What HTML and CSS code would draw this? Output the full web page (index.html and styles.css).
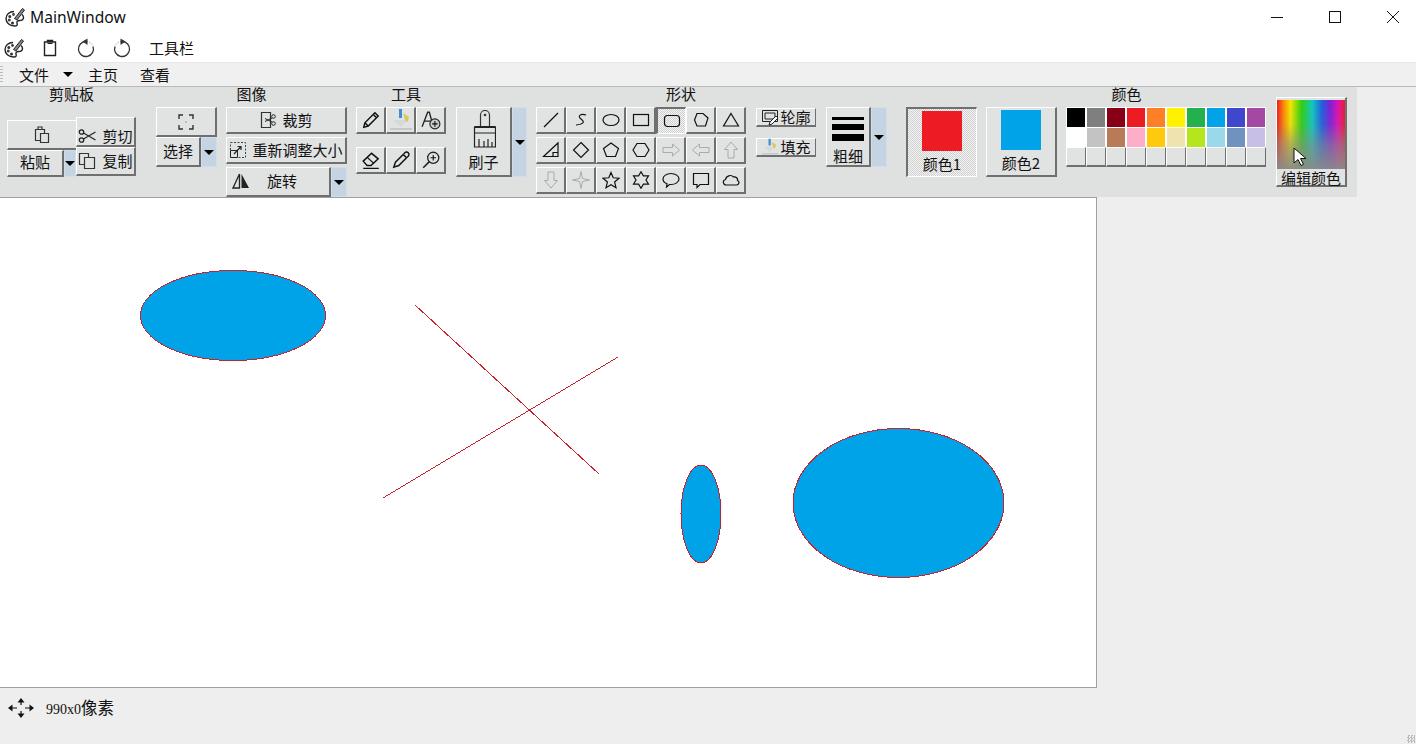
FILE: index.html
```html
<!DOCTYPE html>
<html lang="zh-CN">
<head>
    <meta charset="UTF-8">
    <title>MainWindow</title>
    <link rel="stylesheet" href="styles.css">
</head>
<body>
<svg class="defs" aria-hidden="true">
    <symbol id="palette" viewBox="0 0 20 20">
        <path d="M9 4.500C4.500 4.500 1 7.500 1 11.500S4.500 19 9.500 19c3 0 3-1.500 2.500-3-.5-1.500.5-2.500 2.500-2.500 2.500 0 4-1 4-3 0-1-.5-2-1.500-3" fill="#fff" stroke="#222" stroke-width="1.400"/>
        <circle cx="4.800" cy="9.500" r="1.500" fill="#333"/><circle cx="4.300" cy="13" r="1.500" fill="#444"/><circle cx="7.500" cy="16" r="1.500" fill="#333"/><circle cx="8.500" cy="7.500" r="1.400" fill="#444"/>
        <path d="M9.500 11.500 17.500 1.500l2 1.500-7.500 10z" fill="#888" stroke="#222"/>
    </symbol>
    <symbol id="paint" viewBox="0 0 24 24">
        <rect x="10" y="1" width="3" height="9" fill="#3c8fd6"/>
        <path d="M4 12h15l-7.500 7z" fill="#d8d8d8"/>
        <path d="M14 5 20 9l-1.500 5-2-1z" fill="#d8c85a"/>
        <path d="M1 21h22" stroke="#c8c8c8" stroke-width="2"/>
    </symbol>
    <symbol id="undo" viewBox="0 0 20 20">
        <path d="M10 3.500A7.500 7.500 0 1 0 17 8.500" fill="none" stroke="#333" stroke-width="1.300"/>
        <path d="M11 3.500A7.500 7.500 0 0 1 17 8" fill="none" stroke="#888" stroke-dasharray="1 1.500"/>
        <path d="M6.500 3.500 11.500 .5V7z" fill="#333"/>
    </symbol>
</svg>

<div class="window">
    <header class="titlebar">
        <svg class="title-icon"><use href="#palette"/></svg>
        <span class="title-text">MainWindow</span>
        <div class="win-btns">
            <svg class="win-btn" viewBox="0 0 12 12"><path d="M0 6.500h12" stroke="#111" fill="none"/></svg>
            <svg class="win-btn" viewBox="0 0 12 12"><rect x=".5" y=".5" width="11" height="11" stroke="#111" fill="none"/></svg>
            <svg class="win-btn" viewBox="0 0 12 12"><path d="M0 0l12 12M12 0 0 12" stroke="#111" fill="none"/></svg>
        </div>
    </header>

    <div class="quickbar">
        <svg class="quick-icon"><use href="#palette"/></svg>
        <svg class="quick-icon" viewBox="0 0 20 20"><path d="M4.500 4H15.500V17.500H4.500zM7.500 4V2.500h5V4" fill="none" stroke="#222" stroke-width="1.400"/><path d="M7.500 5.500h5" stroke="#222"/></svg>
        <svg class="quick-icon"><use href="#undo"/></svg>
        <svg class="quick-icon flip"><use href="#undo"/></svg>
        <span class="quick-text">工具栏</span>
    </div>

    <nav class="menubar">
        <span class="menu-item file-item">文件</span>
        <span class="arrow menu-arrow"></span>
        <span class="menu-item home-item">主页</span>
        <span class="menu-item view-item">查看</span>
    </nav>

    <section class="ribbon">
        <div class="group clip-group">
            <div class="group-label">剪贴板</div>
            <div class="group-body">
                <div class="paste">
                    <button class="btn paste-top">
                        <svg class="icon" viewBox="0 0 18 18"><path d="M2.500 3.500h9v11h-9zM5 3.500V1h4v2.500" fill="none" stroke="#333" stroke-width="1.200"/><path d="M7.500 7.500h8v9h-8z" fill="#e1e2e2" stroke="#333" stroke-width="1.200"/></svg>
                    </button>
                    <div class="paste-low">
                        <button class="btn paste-text">粘贴</button>
                        <button class="drop"><span class="arrow"></span></button>
                    </div>
                </div>
                <div class="cutcopy">
                    <button class="btn small-btn cut-btn">
                        <svg class="icon" viewBox="0 0 18 18"><circle cx="3.500" cy="5" r="2.200" fill="none" stroke="#222" stroke-width="1.300"/><circle cx="3.500" cy="13" r="2.200" fill="none" stroke="#222" stroke-width="1.300"/><path d="M5.500 6 17.500 13M5.500 12 17.500 5" stroke="#222" fill="none" stroke-width="1.200"/></svg>
                        <span>剪切</span>
                    </button>
                    <button class="btn small-btn">
                        <svg class="icon" viewBox="0 0 18 18"><path d="M1.500 1.500h9v11h-9z" fill="none" stroke="#333" stroke-width="1.200"/><path d="M6.500 5.500h10v11h-10z" fill="#e1e2e2" stroke="#333" stroke-width="1.200"/></svg>
                        <span>复制</span>
                    </button>
                </div>
            </div>
        </div>

        <div class="group image-group">
            <div class="group-label">图像</div>
            <div class="group-body">
                <div class="select">
                    <button class="btn select-top">
                        <svg class="icon" viewBox="0 0 18 18"><path d="M2 6V2h4M12 2h4v4M16 12v4h-4M6 16H2v-4" fill="none" stroke="#333" stroke-width="1.400"/><rect x="8.500" y="8.500" width="1" height="1" fill="#555"/></svg>
                    </button>
                    <div class="select-low">
                        <button class="btn select-text">选择</button>
                        <button class="drop"><span class="arrow"></span></button>
                    </div>
                </div>
                <div class="image-tools">
                    <button class="btn wide-btn">
                        <svg class="icon" viewBox="0 0 18 18"><path d="M2.500 1.500h9v15h-9z" fill="none" stroke="#333" stroke-width="1.200"/><circle cx="14.500" cy="5.500" r="1.800" fill="none" stroke="#222"/><circle cx="14.500" cy="12.500" r="1.800" fill="none" stroke="#222"/><path d="M13 7 6 10.500M13 11 6 7.500" stroke="#222"/></svg>
                        <span>裁剪</span>
                    </button>
                    <button class="btn wide-btn">
                        <svg class="icon" viewBox="0 0 18 18"><rect x="1.500" y="1.500" width="15" height="15" fill="none" stroke="#444" stroke-dasharray="2 1.500"/><path d="M1.500 9.500h7v7h-7z" fill="#e1e2e2" stroke="#222"/><path d="M5 13 11.500 6M8.500 5.500h3.500v3.500" fill="none" stroke="#222" stroke-width="1.200"/></svg>
                        <span>重新调整大小</span>
                    </button>
                    <div class="rotate">
                        <button class="btn rotate-text">
                            <svg class="icon" viewBox="0 0 18 18"><path d="M7.500 2V16H1z" fill="none" stroke="#222" stroke-width="1.300"/><path d="M9.500 2V16H17z" fill="#222"/></svg>
                            <span class="rotate-label">旋转</span>
                        </button>
                        <button class="drop"><span class="arrow"></span></button>
                    </div>
                </div>
            </div>
        </div>

        <div class="group tools-group">
            <div class="group-label">工具</div>
            <div class="group-body">
                <div class="tool-grid">
                    <button class="btn cell">
                        <svg class="tool-icon" viewBox="0 0 18 18"><path d="M2.500 15.500l1-4L12.500 2.500l3 3L6.500 14.500zM3.500 11.500l3 3M11 4l3 3" fill="none" stroke="#111" stroke-width="1.300"/></svg>
                    </button>
                    <button class="btn cell"><svg class="icon-paint"><use href="#paint"/></svg></button>
                    <button class="btn cell">
                        <svg class="tool-icon" viewBox="0 0 18 18"><path d="M1 15 6 2h1.500L10 11M3 10h6" fill="none" stroke="#222" stroke-width="1.200"/><circle cx="12.500" cy="12.500" r="4.500" fill="#ccc" stroke="#222"/><path d="M10 12.500h5M12.500 10v5" stroke="#111"/></svg>
                    </button>
                    <button class="btn cell">
                        <svg class="tool-icon" viewBox="0 0 18 18"><path d="M2 10 9.500 3l6 5L9 14H5.500z" fill="none" stroke="#111" stroke-width="1.300"/><path d="M5.500 6.500 11.500 12M2 16.500h14" fill="none" stroke="#111"/></svg>
                    </button>
                    <button class="btn cell">
                        <svg class="tool-icon" viewBox="0 0 18 18"><path d="M2.500 15.500 4 11l7-7 3 3-7 7zM11.500 3.500c1.500-2 3-2 4-1s1 2.500-1 4" fill="none" stroke="#111" stroke-width="1.300"/></svg>
                    </button>
                    <button class="btn cell">
                        <svg class="tool-icon" viewBox="0 0 18 18"><circle cx="11" cy="7" r="5" fill="none" stroke="#222" stroke-width="1.200"/><path d="M7.500 10.500 2 16" stroke="#222" stroke-width="1.400"/><path d="M8.500 7h5M11 4.500v5" stroke="#111"/></svg>
                    </button>
                </div>
            </div>
        </div>

        <div class="group brush-group">
            <div class="group-label"></div>
            <div class="group-body">
                <button class="btn brush-btn">
                    <svg class="brush-icon" viewBox="0 0 24 38"><path d="M8.500 17V5a4.500 4.500 0 0 1 9 0v12z" fill="none" stroke="#333" stroke-width="1.200"/><circle cx="13" cy="5" r="1.300" fill="#333"/><path d="M2.500 17h21v20h-21zM2.500 23h21" fill="none" stroke="#222" stroke-width="1.200"/><path d="M2.500 16h21v2h-21z" fill="#222"/><path d="M7 37v-8M12 37v-6M16 37v-8M20 37v-5" fill="none" stroke="#222" stroke-width="1.200"/></svg>
                    <span>刷子</span>
                </button>
                <button class="drop drop-tall"><span class="arrow"></span></button>
            </div>
        </div>

        <div class="group shapes-group">
            <div class="group-label">形状</div>
            <div class="group-body">
                <div class="shape-grid">
                    <button class="btn cell"><svg class="icon" viewBox="0 0 18 18"><path d="M2 16 16 2" class="sh"/></svg></button>
                    <button class="btn cell"><svg class="icon" viewBox="0 0 18 18"><path d="M14 4C9 2 5 5 9 8s3 5-5 6" class="sh"/></svg></button>
                    <button class="btn cell"><svg class="icon" viewBox="0 0 18 18"><ellipse cx="9" cy="9" rx="8" ry="5.500" class="sh"/></svg></button>
                    <button class="btn cell"><svg class="icon" viewBox="0 0 18 18"><rect x="1.500" y="3.500" width="15" height="11" class="sh"/></svg></button>
                    <button class="btn cell cell-on"><svg class="icon" viewBox="0 0 18 18"><rect x="1.500" y="3.500" width="15" height="11" rx="3" class="sh"/></svg></button>
                    <button class="btn cell"><svg class="icon" viewBox="0 0 18 18"><path d="M5 2.500h6l5 4.500-2.500 8H5L2.500 9z" class="sh"/></svg></button>
                    <button class="btn cell"><svg class="icon" viewBox="0 0 18 18"><path d="M9 2.500 16.500 15h-15z" class="sh"/></svg></button>

                    <button class="btn cell"><svg class="icon" viewBox="0 0 18 18"><path d="M16 2v13.500H1.500zM11 15.500v-4h5" class="sh"/></svg></button>
                    <button class="btn cell"><svg class="icon" viewBox="0 0 18 18"><path d="M9 1.500 16.500 9 9 16.500 1.500 9z" class="sh"/></svg></button>
                    <button class="btn cell"><svg class="icon" viewBox="0 0 18 18"><path d="M9 2 16.500 7.500 13.500 15.500h-9L1.500 7.500z" class="sh"/></svg></button>
                    <button class="btn cell"><svg class="icon" viewBox="0 0 18 18"><path d="M5 2.500h8L17 9l-4 6.500H5L1 9z" class="sh"/></svg></button>
                    <button class="btn cell"><svg class="icon" viewBox="0 0 18 18"><path d="M1 6.500h9.500V3L17.500 9l-7 6v-3.500H1z" class="sh-off"/></svg></button>
                    <button class="btn cell"><svg class="icon" viewBox="0 0 18 18"><path d="M17 6.500H7.500V3L.5 9l7 6v-3.500H17z" class="sh-off"/></svg></button>
                    <button class="btn cell"><svg class="icon" viewBox="0 0 18 18"><path d="M6 17V8.500H2.500L9 1l6.500 7.500H12V17z" class="sh-off"/></svg></button>

                    <button class="btn cell"><svg class="icon" viewBox="0 0 18 18"><path d="M6 1v8.500H2.500L9 17l6.500-7.500H12V1z" class="sh-off"/></svg></button>
                    <button class="btn cell"><svg class="icon" viewBox="0 0 18 18"><path d="M9 .5 10.500 7.500 17.500 9l-7 1.500L9 17.500l-1.500-7L.5 9l7-1.500z" class="sh-off"/></svg></button>
                    <button class="btn cell"><svg class="icon" viewBox="0 0 18 18"><path d="M9 1.500 11.200 6.800 17 7.200 12.600 11l1.400 5.700L9 13.700 4 16.700 5.400 11 1 7.200 6.800 6.800z" class="sh"/></svg></button>
                    <button class="btn cell"><svg class="icon" viewBox="0 0 18 18"><path d="M9 .8 11.400 4.800 16.500 4.800 14 9l2.500 4.200H11.400L9 17.200 6.600 13.200H1.500L4 9 1.500 4.800H6.600z" class="sh"/></svg></button>
                    <button class="btn cell"><svg class="icon" viewBox="0 0 18 18"><path d="M9 2.500c4.500 0 8 2.500 8 5.500s-3.500 5.500-8 5.500H7.500L4.500 16l.5-3.300C2.500 11.800 1 10 1 8c0-3 3.500-5.500 8-5.500z" class="sh"/></svg></button>
                    <button class="btn cell"><svg class="icon" viewBox="0 0 18 18"><path d="M1.500 2.500h15v11H8L5 16.500v-3H1.500z" class="sh"/></svg></button>
                    <button class="btn cell"><svg class="icon" viewBox="0 0 18 18"><path d="M4.500 14C1 14 0 9.500 3.500 8.500 4 5 9 3 11.500 6c3-.5 4.500 2 4 3.500 2.500 1 1.500 4.500-1 4.500z" class="sh"/></svg></button>
                </div>
                <div class="outline-fill">
                    <button class="btn of-btn">
                        <svg class="icon" viewBox="0 0 18 18"><path d="M1.500 2.500h15v11h-15zM4 5h10v6H4z" fill="none" stroke="#222"/><path d="M8 17l1-3 6-6 2 2-6 6z" fill="#fff" stroke="#222"/></svg>
                        <span>轮廓</span>
                    </button>
                    <button class="btn of-btn">
                        <svg class="icon"><use href="#paint"/></svg>
                        <span>填充</span>
                    </button>
                </div>
            </div>
        </div>

        <div class="group thick-group">
            <div class="group-label"></div>
            <div class="group-body">
                <button class="btn thick-btn">
                    <span class="thick-lines"><i class="t1"></i><i class="t2"></i><i class="t3"></i></span>
                    <span class="thick-text">粗细</span>
                </button>
                <button class="drop drop-thick"><span class="arrow"></span></button>
            </div>
        </div>

        <div class="group color-group">
            <div class="group-label">颜色</div>
            <div class="group-body">
                <button class="btn color-btn color-on">
                    <span class="swatch red"></span>
                    <span>颜色1</span>
                </button>
                <button class="btn color-btn">
                    <span class="swatch blue"></span>
                    <span>颜色2</span>
                </button>
                <div class="palette">
                    <i style="background:#000000"></i><i style="background:#7f7f7f"></i><i style="background:#880015"></i><i style="background:#ed1c24"></i><i style="background:#ff7f27"></i><i style="background:#fff200"></i><i style="background:#22b14c"></i><i style="background:#00a2e8"></i><i style="background:#3f48cc"></i><i style="background:#a349a4"></i>
                    <i style="background:#ffffff"></i><i style="background:#c3c3c3"></i><i style="background:#b97a57"></i><i style="background:#ffaec9"></i><i style="background:#ffc90e"></i><i style="background:#efe4b0"></i><i style="background:#b5e61d"></i><i style="background:#99d9ea"></i><i style="background:#7092be"></i><i style="background:#c8bfe7"></i>
                    <i></i><i></i><i></i><i></i><i></i><i></i><i></i><i></i><i></i><i></i>
                </div>
                <button class="btn edit-color">
                    <span class="rainbow"></span>
                    <span class="edit-text">编辑颜色</span>
                    <svg class="cursor" viewBox="0 0 14 20"><path d="M1 1v15l4-3.500 3 6 2.500-1.200-3-5.800H13z" fill="#fff" stroke="#111"/></svg>
                </button>
            </div>
        </div>
    </section>

    <div class="work">
        <svg class="canvas" viewBox="0 1 1096 489">
            <ellipse cx="233" cy="118.500" rx="92.500" ry="45" class="shape"/>
            <ellipse cx="701" cy="317" rx="20" ry="49" class="shape"/>
            <ellipse cx="898.500" cy="306" rx="105.500" ry="74.500" class="shape"/>
            <path d="M415 108 599 277M383 301 618 160" class="line"/>
        </svg>
    </div>

    <footer class="statusbar">
        <svg class="move-icon" viewBox="0 0 26 20"><path d="M13 0l-3.500 4.500h7zM13 20l-3.500-4.500h7zM0 10l4.500-3.500v7zM26 10l-4.500-3.500v7z" fill="#111"/><path d="M4 10h5M17 10h5M13 4v3M13 13v3" stroke="#111" stroke-width="1.200"/></svg>
        <span class="status-text">990x0<span class="status-unit">像素</span></span>
        <span class="grip"></span>
    </footer>
</div>
</body>
</html>
```

FILE: styles.css
```css
*{
    margin: 0;
    padding: 0;
    box-sizing: border-box;
}
html,body{
    height: 100%;
    overflow: hidden;
}
body{
    font-family: "Noto Sans CJK SC", "Liberation Sans", sans-serif;
    font-size: 15px;
    line-height: 18px;
    color: #111;
    background: #eeeeee;
}
button{
    font: inherit;
    color: inherit;
}
.defs{
    position: absolute;
    width: 0;
    height: 0;
}
.window{
    height: 744px;
    display: flex;
    flex-direction: column;
}

/* title bar */
.titlebar{
    height: 34px;
    background: #fff;
    display: flex;
    align-items: center;
    padding-left: 5px;
}
.title-icon{
    width: 20px;
    height: 20px;
}
.title-text{
    font-family: "Noto Sans", "Liberation Sans", sans-serif;
    font-size: 15.6px;
    margin-left: 5px;
}
.win-btns{
    margin-left: auto;
    display: flex;
    gap: 46px;
    padding-right: 17px;
}
.win-btn{
    width: 12px;
    height: 12px;
}

.quickbar{
    height: 28px;
    background: #fff;
    display: flex;
    align-items: center;
    padding-left: 4px;
}
.quick-icon{
    width: 20px;
    height: 20px;
    margin-right: 16px;
}
.flip{
    transform: scaleX(-1);
}
.quick-text{
    margin-left: 1px;
}

/* menu */
.menubar{
    height: 25px;
    background: #f0f0f0;
    border-top: 1px solid #e8e8e8;
    border-bottom: 1px solid #b9b9b9;
    display: flex;
    align-items: center;
    padding-left: 19px;
    position: relative;
}
.menubar::before{
    content: "";
    position: absolute;
    left: 0;
    top: 3px;
    bottom: 3px;
    width: 3px;
    background: repeating-linear-gradient(#bbb 0 1px, transparent 1px 3px);
}
.file-item{
    width: 44px;
}
.menu-arrow{
    margin-right: 15px;
}
.home-item{
    width: 52px;
}
.arrow{
    display: inline-block;
    width: 0;
    height: 0;
    border-left: 5px solid transparent;
    border-right: 5px solid transparent;
    border-top: 5px solid #000;
}

/* ribbon */
.ribbon{
    height: 110px;
    width: 1357px;
    background: #dfe0e0;
    display: flex;
    padding-left: 7px;
    flex-shrink: 0;
}
.group-label{
    height: 20px;
    line-height: 14px;
    text-align: center;
}
.group-body{
    display: flex;
    align-items: flex-start;
}
.clip-group{
    width: 129px;
}
.image-group{
    width: 191px;
    margin-left: 20px;
}
.tools-group{
    width: 100px;
    margin-left: 9px;
}
.brush-group{
    width: 71px;
}
.shapes-group{
    width: 290px;
    margin-left: 9px;
}
.thick-group{
    width: 61px;
}
.color-group{
    width: 441px;
    margin-left: 19px;
}

.btn{
    background: #e1e2e2;
    border: 1px solid #fff;
    border-right: 2px solid #6f6f6f;
    border-bottom: 2px solid #6f6f6f;
    display: flex;
    align-items: center;
    justify-content: center;
    white-space: nowrap;
}
.drop{
    background: #c5d4e3;
    border: 1px solid #d2dde8;
    display: flex;
    align-items: center;
    justify-content: center;
}
.icon{
    width: 18px;
    height: 18px;
    flex-shrink: 0;
}
.tool-icon{
    width: 20px;
    height: 20px;
}
.icon-paint{
    width: 24px;
    height: 24px;
}

/* clipboard */
.paste{
    width: 69px;
    margin-top: 13px;
}
.paste-top{
    width: 69px;
    height: 30px;
    border-right: 0;
}
.paste-low{
    display: flex;
    height: 27px;
}
.paste-text{
    width: 57px;
    padding-bottom: 2px;
}
.paste-low .drop{
    width: 12px;
}
.cutcopy{
    width: 60px;
    margin-top: 10px;
}
.small-btn{
    width: 60px;
    height: 29px;
    gap: 6px;
}
.cut-btn{
    height: 30px;
    padding-top: 8px;
}

/* image */
.select{
    width: 61px;
}
.select-top{
    width: 61px;
    height: 30px;
}
.select-low{
    display: flex;
    height: 30px;
}
.select-text{
    width: 45px;
    padding-bottom: 2px;
}
.select-low .drop{
    width: 16px;
}
.image-tools{
    width: 121px;
    margin-left: 9px;
    display: flex;
    flex-direction: column;
    gap: 3px;
}
.wide-btn{
    height: 27px;
    gap: 5px;
}
.rotate{
    display: flex;
    height: 30px;
}
.rotate-text{
    width: 105px;
    justify-content: flex-start;
    padding: 0 0 2px 5px;
}
.rotate-label{
    margin-left: 17px;
}
.rotate .drop{
    width: 16px;
}

/* tools and shapes */
.tool-grid{
    display: grid;
    grid-template-columns: repeat(3, 30px);
    grid-auto-rows: 27px;
    row-gap: 13px;
}
.shape-grid{
    display: grid;
    grid-template-columns: repeat(7, 30px);
    grid-auto-rows: 27px;
    row-gap: 3px;
}
.sh{
    fill: none;
    stroke: #111;
    stroke-width: 1.200;
}
.sh-off{
    fill: none;
    stroke: #aaa;
}
.cell-on{
    border: 1px solid #fff;
    border-top: 2px solid #6f6f6f;
    border-left: 2px solid #6f6f6f;
    background: repeating-conic-gradient(#cfcfcf 0 25%, #f4f4f4 0 50%) 0 0 / 2px 2px;
}
.brush-btn{
    width: 56px;
    height: 70px;
    flex-direction: column;
    justify-content: flex-start;
    padding-top: 2px;
    gap: 5px;
}
.brush-icon{
    width: 24px;
    height: 38px;
    flex-shrink: 0;
}
.drop-tall{
    width: 15px;
    height: 70px;
}
.outline-fill{
    width: 60px;
    margin-left: 10px;
    margin-top: 1px;
    display: flex;
    flex-direction: column;
    gap: 11px;
}
.of-btn{
    height: 19px;
    gap: 1px;
    border-right-width: 1px;
}
.thick-btn{
    width: 45px;
    height: 60px;
    flex-direction: column;
    justify-content: flex-start;
    padding-top: 9px;
}
.thick-lines{
    display: flex;
    flex-direction: column;
    gap: 4px;
    width: 32px;
    margin-bottom: 7px;
}
.thick-lines i{
    display: block;
    background: #000;
}
.thick-text{
    line-height: 16px;
}
.t1{
    height: 3px;
}
.t2{
    height: 6px;
}
.t3{
    height: 7px;
}
.drop-thick{
    width: 16px;
    height: 60px;
}

/* colors */
.color-btn{
    width: 71px;
    height: 70px;
    flex-direction: column;
    justify-content: flex-start;
    padding-top: 2px;
    margin-right: 9px;
}
.color-on{
    border: 1px solid #fff;
    border-top: 2px solid #6f6f6f;
    border-left: 2px solid #6f6f6f;
    background: repeating-conic-gradient(#cfcfcf 0 25%, #f4f4f4 0 50%) 0 0 / 2px 2px;
}
.swatch{
    display: block;
    width: 40px;
    height: 40px;
    margin-bottom: 4px;
    flex-shrink: 0;
}
.red{
    background: #ed1c24;
}
.blue{
    background: #00a2e8;
}
.palette{
    display: grid;
    grid-template-columns: repeat(10, 20px);
    grid-auto-rows: 20px;
    width: 201px;
    margin-right: 9px;
}
.palette i{
    display: block;
    background: #e1e2e2;
    border: 1px solid #fff;
    border-right: 1px solid #6f6f6f;
    border-bottom: 2px solid #6f6f6f;
}
.palette i[style]{
    border-color: #fff;
    border-width: 1px 1px 0 1px;
}
.edit-color{
    width: 71px;
    height: 90px;
    margin-top: -10px;
    flex-direction: column;
    justify-content: flex-start;
    padding-top: 2px;
    position: relative;
}
.rainbow{
    display: block;
    width: 68px;
    height: 69px;
    flex-shrink: 0;
    background:
        linear-gradient(rgba(138,138,138,0) 0%, rgba(138,138,138,.1) 35%, rgba(138,138,138,.6) 65%, rgba(138,138,138,.95) 100%),
        linear-gradient(90deg, #ed1c24 0%, #ff8a00 10%, #f5e800 20%, #30d010 36%, #10c8c0 52%, #1f5fe0 66%, #7a20d8 78%, #e010b0 90%, #ed1c24 100%);
}
.edit-text{
    line-height: 17px;
}
.cursor{
    position: absolute;
    left: 16px;
    top: 49px;
    width: 14px;
    height: 20px;
}

/* canvas */
.work{
    width: 1097px;
    height: 491px;
    flex-shrink: 0;
    border-top: 1px solid #a0a0a0;
    border-right: 1px solid #a0a0a0;
    border-bottom: 1px solid #a0a0a0;
}
.canvas{
    display: block;
    width: 1096px;
    height: 489px;
    background: #fff;
}
.shape{
    fill: #00a2e8;
    stroke: #c8202c;
    shape-rendering: crispEdges;
}
.line{
    fill: none;
    stroke: #c8202c;
    shape-rendering: crispEdges;
}

/* status */
.statusbar{
    flex: 1;
    display: flex;
    align-items: center;
    padding: 0 0 16px 8px;
    background: #eeeeee;
    position: relative;
}
.move-icon{
    width: 26px;
    height: 20px;
}
.status-text{
    margin-left: 12px;
    font-family: "Liberation Serif", serif;
    font-size: 14px;
}
.status-unit{
    font-family: "Noto Sans CJK SC", sans-serif;
    font-size: 16.5px;
}
.grip{
    position: absolute;
    right: 1px;
    bottom: 1px;
    width: 8px;
    height: 8px;
    background: repeating-conic-gradient(#bbb 0 25%, transparent 0 50%) 0 0 / 3px 3px;
}
```
